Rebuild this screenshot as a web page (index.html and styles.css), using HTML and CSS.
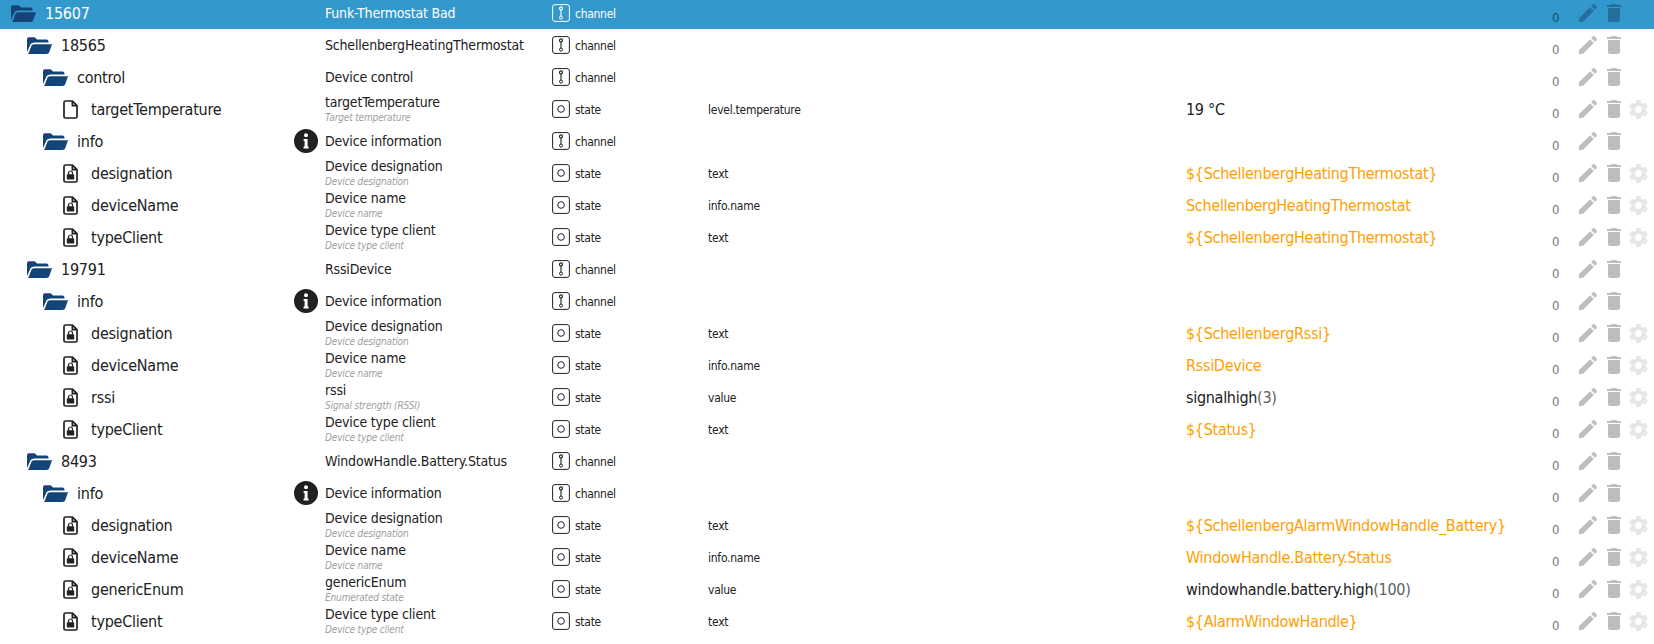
FILE: index.html
```html
<!DOCTYPE html>
<html lang="en">
<head>
<meta charset="utf-8">
<title>Objects</title>
<link rel="stylesheet" href="styles.css">
</head>
<body>
<svg class="defs" width="0" height="0" aria-hidden="true">
<symbol id="folder" viewBox="0 0 25 17"><path d="M0 2.2Q0 .3 2 .3H7.6L10 2.6H19.5Q21.5 2.6 21.5 4.6V5.6H7.5Q4.2 5.6 3 8.4L0 15Z"/><path d="M4.6 8.6Q5.4 7.2 7.5 7.2H25L22.3 15Q21.6 17 19.6 17H1.2Z"/></symbol>
<symbol id="doc" viewBox="0 0 15 19"><path fill="none" stroke="currentColor" stroke-width="1.7" d="M2.4 1H9.4L14 5.6V16.6Q14 18 12.6 18H2.4Q1 18 1 16.6V2.4Q1 1 2.4 1ZM9.4 1V5.6H14"/></symbol>
<symbol id="lock" viewBox="0 0 15 19"><path fill="none" stroke="currentColor" stroke-width="1.7" d="M2.4 1H9.4L14 5.6V16.6Q14 18 12.6 18H2.4Q1 18 1 16.6V2.4Q1 1 2.4 1ZM9.4 1V5.6H14"/><path fill="none" stroke="currentColor" stroke-width="1.2" d="M5.5 10.6V9A2 2 0 0 1 9.5 9V10.6"/><rect x="3.8" y="10.2" width="7.4" height="5.4" rx=".6" fill="currentColor"/></symbol>
<symbol id="info" viewBox="0 0 24 24"><path fill-rule="evenodd" d="M12 0A12 12 0 1 1 12 24A12 12 0 1 1 12 0ZM12 4.2A2 2 0 1 0 12 8.2A2 2 0 1 0 12 4.2ZM9.6 10V12H10.6V17.5H9.6V19.6H14.6V17.5H13.6V10Z"/></symbol>
<symbol id="channel" viewBox="0 0 18 18"><rect x=".6" y=".6" width="16.8" height="16.8" rx="2.4" fill="none" stroke="currentColor" stroke-width="1"/><circle cx="9" cy="4.4" r="1.5" fill="none" stroke="currentColor" stroke-width="1.2"/><path stroke="currentColor" stroke-width="1.1" d="M9 6V12"/><circle cx="9" cy="13.6" r="1.5" fill="none" stroke="currentColor"/></symbol>
<symbol id="state" viewBox="0 0 18 18"><rect x=".6" y=".6" width="16.8" height="16.8" rx="2.4" fill="none" stroke="currentColor" stroke-width="1"/><circle cx="9" cy="9" r="3.3" fill="none" stroke="currentColor"/></symbol>
<symbol id="edit" viewBox="3 3 18 18"><path d="M3 17.25V21h3.75L17.81 9.94l-3.75-3.75L3 17.25zM20.71 7.04c.39-.39.39-1.02 0-1.41l-2.34-2.34a.9959.9959 0 0 0-1.41 0l-1.83 1.83 3.75 3.75 1.83-1.83z"/></symbol>
<symbol id="trash" viewBox="5 3 14 18"><path d="M6 19c0 1.1.9 2 2 2h8c1.1 0 2-.9 2-2V7H6v12zM19 4h-3.5l-1-1h-5l-1 1H5v2h14V4z"/></symbol>
<symbol id="gear" viewBox="2.4 2.4 19.2 19.2"><path d="M19.14,12.94c0.04-0.3,0.06-0.61,0.06-0.94c0-0.32-0.02-0.64-0.07-0.94l2.03-1.58c0.18-0.14,0.23-0.41,0.12-0.61 l-1.92-3.32c-0.12-0.22-0.37-0.29-0.59-0.22l-2.39,0.96c-0.5-0.38-1.03-0.7-1.62-0.94L14.4,2.81c-0.04-0.24-0.24-0.41-0.48-0.41 h-3.84c-0.24,0-0.43,0.17-0.47,0.41L9.25,5.35C8.66,5.59,8.12,5.92,7.63,6.29L5.24,5.33c-0.22-0.08-0.47,0-0.59,0.22L2.74,8.87 C2.62,9.08,2.66,9.34,2.86,9.48l2.03,1.58C4.84,11.36,4.8,11.69,4.8,12s0.02,0.64,0.07,0.94l-2.03,1.58 c-0.18,0.14-0.23,0.41-0.12,0.61l1.92,3.32c0.12,0.22,0.37,0.29,0.59,0.22l2.39-0.96c0.5,0.38,1.03,0.7,1.62,0.94l0.36,2.54 c0.05,0.24,0.24,0.41,0.48,0.41h3.84c0.24,0,0.44-0.17,0.47-0.41l0.36-2.54c0.59-0.24,1.13-0.56,1.62-0.94l2.39,0.96 c0.22,0.08,0.47,0,0.59-0.22l1.92-3.32c0.12-0.22,0.07-0.47-0.12-0.61L19.14,12.94z M12,15.6c-1.98,0-3.6-1.62-3.6-3.6 s1.62-3.6,3.6-3.6s3.6,1.62,3.6,3.6S13.98,15.6,12,15.6z"/></symbol>
</svg>
<main class="list">
<div class="row selected"><div class="tree lvl0"><svg class="folder"><use href="#folder"/></svg><span>15607</span></div><div class="info-cell"></div><div class="name"><span>Funk-Thermostat Bad</span></div><div class="type"><svg class="type-icon"><use href="#channel"/></svg><span class="type-label">channel</span></div><div class="role"></div><div class="value"></div><div class="count">0</div><div class="actions"><svg class="ic-edit"><use href="#edit"/></svg><svg class="ic-trash"><use href="#trash"/></svg></div></div>
<div class="row"><div class="tree lvl1"><svg class="folder"><use href="#folder"/></svg><span>18565</span></div><div class="info-cell"></div><div class="name"><span>SchellenbergHeatingThermostat</span></div><div class="type"><svg class="type-icon"><use href="#channel"/></svg><span class="type-label">channel</span></div><div class="role"></div><div class="value"></div><div class="count">0</div><div class="actions"><svg class="ic-edit"><use href="#edit"/></svg><svg class="ic-trash"><use href="#trash"/></svg></div></div>
<div class="row"><div class="tree lvl2"><svg class="folder"><use href="#folder"/></svg><span>control</span></div><div class="info-cell"></div><div class="name"><span>Device control</span></div><div class="type"><svg class="type-icon"><use href="#channel"/></svg><span class="type-label">channel</span></div><div class="role"></div><div class="value"></div><div class="count">0</div><div class="actions"><svg class="ic-edit"><use href="#edit"/></svg><svg class="ic-trash"><use href="#trash"/></svg></div></div>
<div class="row"><div class="tree lvl3"><svg class="file"><use href="#doc"/></svg><span>targetTemperature</span></div><div class="info-cell"></div><div class="name"><span>targetTemperature</span><span class="sub">Target temperature</span></div><div class="type"><svg class="type-icon"><use href="#state"/></svg><span class="type-label">state</span></div><div class="role">level.temperature</div><div class="value">19 °C</div><div class="count">0</div><div class="actions"><svg class="ic-edit"><use href="#edit"/></svg><svg class="ic-trash"><use href="#trash"/></svg><svg class="ic-gear"><use href="#gear"/></svg></div></div>
<div class="row"><div class="tree lvl2"><svg class="folder"><use href="#folder"/></svg><span>info</span></div><div class="info-cell"><svg class="info"><use href="#info"/></svg></div><div class="name"><span>Device information</span></div><div class="type"><svg class="type-icon"><use href="#channel"/></svg><span class="type-label">channel</span></div><div class="role"></div><div class="value"></div><div class="count">0</div><div class="actions"><svg class="ic-edit"><use href="#edit"/></svg><svg class="ic-trash"><use href="#trash"/></svg></div></div>
<div class="row"><div class="tree lvl3"><svg class="file"><use href="#lock"/></svg><span>designation</span></div><div class="info-cell"></div><div class="name"><span>Device designation</span><span class="sub">Device designation</span></div><div class="type"><svg class="type-icon"><use href="#state"/></svg><span class="type-label">state</span></div><div class="role">text</div><div class="value orange">${SchellenbergHeatingThermostat}</div><div class="count">0</div><div class="actions"><svg class="ic-edit"><use href="#edit"/></svg><svg class="ic-trash"><use href="#trash"/></svg><svg class="ic-gear"><use href="#gear"/></svg></div></div>
<div class="row"><div class="tree lvl3"><svg class="file"><use href="#lock"/></svg><span>deviceName</span></div><div class="info-cell"></div><div class="name"><span>Device name</span><span class="sub">Device name</span></div><div class="type"><svg class="type-icon"><use href="#state"/></svg><span class="type-label">state</span></div><div class="role">info.name</div><div class="value orange">SchellenbergHeatingThermostat</div><div class="count">0</div><div class="actions"><svg class="ic-edit"><use href="#edit"/></svg><svg class="ic-trash"><use href="#trash"/></svg><svg class="ic-gear"><use href="#gear"/></svg></div></div>
<div class="row"><div class="tree lvl3"><svg class="file"><use href="#lock"/></svg><span>typeClient</span></div><div class="info-cell"></div><div class="name"><span>Device type client</span><span class="sub">Device type client</span></div><div class="type"><svg class="type-icon"><use href="#state"/></svg><span class="type-label">state</span></div><div class="role">text</div><div class="value orange">${SchellenbergHeatingThermostat}</div><div class="count">0</div><div class="actions"><svg class="ic-edit"><use href="#edit"/></svg><svg class="ic-trash"><use href="#trash"/></svg><svg class="ic-gear"><use href="#gear"/></svg></div></div>
<div class="row"><div class="tree lvl1"><svg class="folder"><use href="#folder"/></svg><span>19791</span></div><div class="info-cell"></div><div class="name"><span>RssiDevice</span></div><div class="type"><svg class="type-icon"><use href="#channel"/></svg><span class="type-label">channel</span></div><div class="role"></div><div class="value"></div><div class="count">0</div><div class="actions"><svg class="ic-edit"><use href="#edit"/></svg><svg class="ic-trash"><use href="#trash"/></svg></div></div>
<div class="row"><div class="tree lvl2"><svg class="folder"><use href="#folder"/></svg><span>info</span></div><div class="info-cell"><svg class="info"><use href="#info"/></svg></div><div class="name"><span>Device information</span></div><div class="type"><svg class="type-icon"><use href="#channel"/></svg><span class="type-label">channel</span></div><div class="role"></div><div class="value"></div><div class="count">0</div><div class="actions"><svg class="ic-edit"><use href="#edit"/></svg><svg class="ic-trash"><use href="#trash"/></svg></div></div>
<div class="row"><div class="tree lvl3"><svg class="file"><use href="#lock"/></svg><span>designation</span></div><div class="info-cell"></div><div class="name"><span>Device designation</span><span class="sub">Device designation</span></div><div class="type"><svg class="type-icon"><use href="#state"/></svg><span class="type-label">state</span></div><div class="role">text</div><div class="value orange">${SchellenbergRssi}</div><div class="count">0</div><div class="actions"><svg class="ic-edit"><use href="#edit"/></svg><svg class="ic-trash"><use href="#trash"/></svg><svg class="ic-gear"><use href="#gear"/></svg></div></div>
<div class="row"><div class="tree lvl3"><svg class="file"><use href="#lock"/></svg><span>deviceName</span></div><div class="info-cell"></div><div class="name"><span>Device name</span><span class="sub">Device name</span></div><div class="type"><svg class="type-icon"><use href="#state"/></svg><span class="type-label">state</span></div><div class="role">info.name</div><div class="value orange">RssiDevice</div><div class="count">0</div><div class="actions"><svg class="ic-edit"><use href="#edit"/></svg><svg class="ic-trash"><use href="#trash"/></svg><svg class="ic-gear"><use href="#gear"/></svg></div></div>
<div class="row"><div class="tree lvl3"><svg class="file"><use href="#lock"/></svg><span>rssi</span></div><div class="info-cell"></div><div class="name"><span>rssi</span><span class="sub">Signal strength (RSSI)</span></div><div class="type"><svg class="type-icon"><use href="#state"/></svg><span class="type-label">state</span></div><div class="role">value</div><div class="value">signalhigh<span class="unit">(3)</span></div><div class="count">0</div><div class="actions"><svg class="ic-edit"><use href="#edit"/></svg><svg class="ic-trash"><use href="#trash"/></svg><svg class="ic-gear"><use href="#gear"/></svg></div></div>
<div class="row"><div class="tree lvl3"><svg class="file"><use href="#lock"/></svg><span>typeClient</span></div><div class="info-cell"></div><div class="name"><span>Device type client</span><span class="sub">Device type client</span></div><div class="type"><svg class="type-icon"><use href="#state"/></svg><span class="type-label">state</span></div><div class="role">text</div><div class="value orange">${Status}</div><div class="count">0</div><div class="actions"><svg class="ic-edit"><use href="#edit"/></svg><svg class="ic-trash"><use href="#trash"/></svg><svg class="ic-gear"><use href="#gear"/></svg></div></div>
<div class="row"><div class="tree lvl1"><svg class="folder"><use href="#folder"/></svg><span>8493</span></div><div class="info-cell"></div><div class="name"><span>WindowHandle.Battery.Status</span></div><div class="type"><svg class="type-icon"><use href="#channel"/></svg><span class="type-label">channel</span></div><div class="role"></div><div class="value"></div><div class="count">0</div><div class="actions"><svg class="ic-edit"><use href="#edit"/></svg><svg class="ic-trash"><use href="#trash"/></svg></div></div>
<div class="row"><div class="tree lvl2"><svg class="folder"><use href="#folder"/></svg><span>info</span></div><div class="info-cell"><svg class="info"><use href="#info"/></svg></div><div class="name"><span>Device information</span></div><div class="type"><svg class="type-icon"><use href="#channel"/></svg><span class="type-label">channel</span></div><div class="role"></div><div class="value"></div><div class="count">0</div><div class="actions"><svg class="ic-edit"><use href="#edit"/></svg><svg class="ic-trash"><use href="#trash"/></svg></div></div>
<div class="row"><div class="tree lvl3"><svg class="file"><use href="#lock"/></svg><span>designation</span></div><div class="info-cell"></div><div class="name"><span>Device designation</span><span class="sub">Device designation</span></div><div class="type"><svg class="type-icon"><use href="#state"/></svg><span class="type-label">state</span></div><div class="role">text</div><div class="value orange">${SchellenbergAlarmWindowHandle_Battery}</div><div class="count">0</div><div class="actions"><svg class="ic-edit"><use href="#edit"/></svg><svg class="ic-trash"><use href="#trash"/></svg><svg class="ic-gear"><use href="#gear"/></svg></div></div>
<div class="row"><div class="tree lvl3"><svg class="file"><use href="#lock"/></svg><span>deviceName</span></div><div class="info-cell"></div><div class="name"><span>Device name</span><span class="sub">Device name</span></div><div class="type"><svg class="type-icon"><use href="#state"/></svg><span class="type-label">state</span></div><div class="role">info.name</div><div class="value orange">WindowHandle.Battery.Status</div><div class="count">0</div><div class="actions"><svg class="ic-edit"><use href="#edit"/></svg><svg class="ic-trash"><use href="#trash"/></svg><svg class="ic-gear"><use href="#gear"/></svg></div></div>
<div class="row"><div class="tree lvl3"><svg class="file"><use href="#lock"/></svg><span>genericEnum</span></div><div class="info-cell"></div><div class="name"><span>genericEnum</span><span class="sub">Enumerated state</span></div><div class="type"><svg class="type-icon"><use href="#state"/></svg><span class="type-label">state</span></div><div class="role">value</div><div class="value">windowhandle.battery.high<span class="unit">(100)</span></div><div class="count">0</div><div class="actions"><svg class="ic-edit"><use href="#edit"/></svg><svg class="ic-trash"><use href="#trash"/></svg><svg class="ic-gear"><use href="#gear"/></svg></div></div>
<div class="row"><div class="tree lvl3"><svg class="file"><use href="#lock"/></svg><span>typeClient</span></div><div class="info-cell"></div><div class="name"><span>Device type client</span><span class="sub">Device type client</span></div><div class="type"><svg class="type-icon"><use href="#state"/></svg><span class="type-label">state</span></div><div class="role">text</div><div class="value orange">${AlarmWindowHandle}</div><div class="count">0</div><div class="actions"><svg class="ic-edit"><use href="#edit"/></svg><svg class="ic-trash"><use href="#trash"/></svg><svg class="ic-gear"><use href="#gear"/></svg></div></div>
</main>
</body>
</html>
```
FILE: styles.css
```css
* { box-sizing: border-box; }
html, body { margin: 0; height: 100%; overflow: hidden; background: #fff; }
body { font-family: "DejaVu Sans", sans-serif; font-stretch: condensed; color: #212121; }
.defs { position: absolute; }
.list { margin-top: -3px; }
.row { display: grid; grid-template-columns: 294px 31px 227px 156px 478px 366px 27px 102px; height: 32px; align-items: center; }
.row.selected { background: #3399cc; color: #fff; }
.tree { display: flex; align-items: center; font-size: 16px; letter-spacing: -0.25px; }
.lvl0 { padding-left: 11px; }
.lvl1 { padding-left: 27px; }
.lvl2 { padding-left: 43px; }
.lvl3 { padding-left: 63px; }
.folder { width: 25px; height: 17px; margin-right: 9px; color: #164477; fill: currentColor; }
.file { width: 15px; height: 19px; margin-right: 13px; flex: none; }
.info-cell { display: flex; }
.info { width: 24px; height: 24px; fill: #212121; }
.name { font-size: 14px; line-height: 15px; letter-spacing: -0.18px; display: flex; flex-direction: column; gap: 2px; }
.sub { font-size: 10px; line-height: 11px; font-style: italic; color: #9e9e9e; letter-spacing: -0.15px; }
.type { display: flex; align-items: center; font-size: 12px; gap: 5px; letter-spacing: -0.28px; }
.type-label { padding-top: 1px; }
.type-icon { width: 18px; height: 18px; }
.role { font-size: 12px; letter-spacing: -0.25px; padding-top: 1px; }
.value { font-size: 16px; white-space: nowrap; letter-spacing: -0.29px; }
.orange { color: #ffa000; }
.unit { color: #616161; }
.count { font-size: 13px; color: #757575; padding-top: 8px; }
.selected .count { color: #0f4a6e; }
.actions { display: flex; align-items: center; }
.ic-edit { width: 18px; height: 18px; fill: #bdbdbd; margin-right: 10px; }
.ic-trash { width: 14px; height: 18px; fill: #bdbdbd; margin-right: 8px; }
.ic-gear { width: 19px; height: 19px; fill: #e6e6e6; }
.selected .ic-edit, .selected .ic-trash { fill: #256f9c; }
```
